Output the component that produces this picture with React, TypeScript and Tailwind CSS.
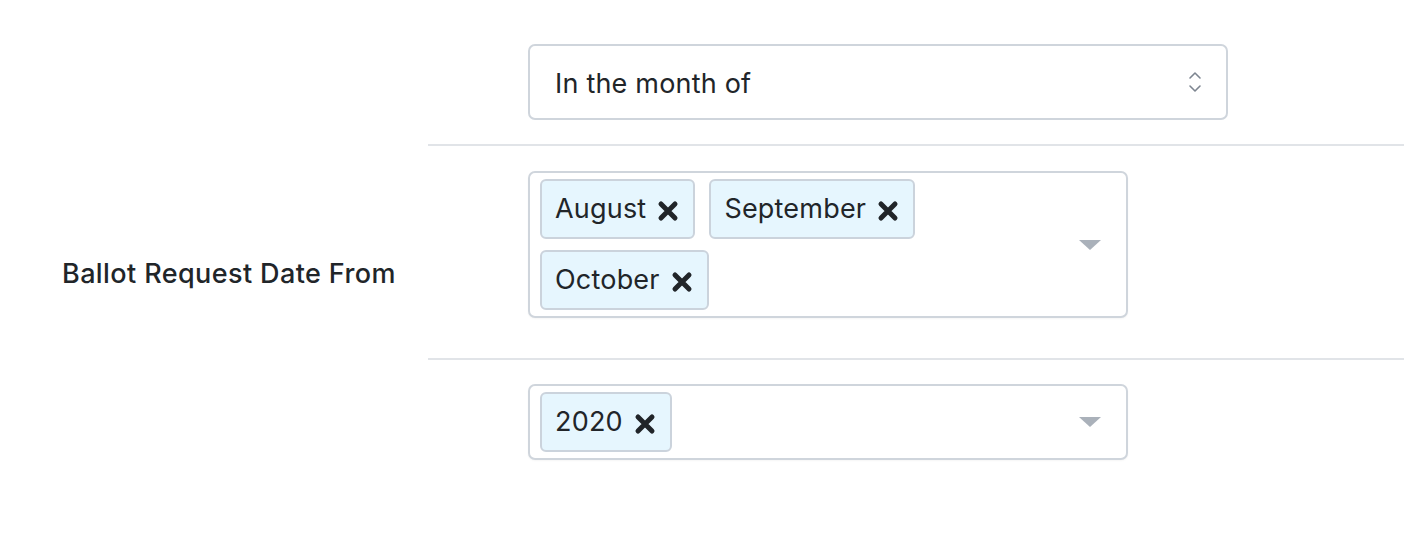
import React from "react";

function Tag({ label }: { label: string }) {
  return (
    <span className="flex h-[60px] items-center gap-[10px] rounded-[6px] border-2 border-[#cbd3dc] bg-[#e6f6fe] pl-[13px] pr-[13px] text-[27px] tracking-[0.2px] text-[#212529]">
      <span>{label}</span>
      <svg width="24" height="24" viewBox="0 0 24 24" className="mt-[3px]">
        <path d="M5 5 L19 19 M19 5 L5 19" stroke="#212529" strokeWidth="5" strokeLinecap="round" />
      </svg>
    </span>
  );
}

function Caret() {
  return (
    <svg width="24" height="12" viewBox="0 0 24 12" className="shrink-0">
      <path d="M1 1 L23 1 L12 11 Z" fill="#aab1ba" />
    </svg>
  );
}

function MultiSelect({ tags }: { tags: string[][] }) {
  return (
    <div className="flex w-[600px] items-center rounded-[7px] border-2 border-[#cfd5dc] bg-white pl-[10px] pr-[24px] shadow-[0_1px_2px_rgba(0,0,0,0.04)]">
      <div className="flex flex-1 flex-col gap-[11px] py-[6px]">
        {tags.map((row, i) => (
          <div key={i} className="flex gap-[14px]">
            {row.map((t) => (
              <Tag key={t} label={t} />
            ))}
          </div>
        ))}
      </div>
      <Caret />
    </div>
  );
}

export default function App() {
  return (
    <div
      className="flex h-[536px] w-[1404px] bg-white text-[#212529]"
      style={{ fontFamily: "Inter, 'Noto Sans', sans-serif" }}
    >
      <div className="flex w-[428px] items-center pl-[62px] pt-[13px]">
        <span className="text-[27px] font-medium tracking-[0.4px]">Ballot Request Date From</span>
      </div>
      <div className="flex flex-1 flex-col">
        <div className="border-b-2 border-[#e1e4e8] pb-[24px] pl-[100px] pt-[44px]">
          <div className="flex h-[76px] w-[700px] items-center justify-between rounded-[7px] border-2 border-[#cfd5dc] bg-white pl-[25px] pr-[24px]">
            <span className="pt-[4px] text-[27px] tracking-[0.2px]">In the month of</span>
            <svg width="14" height="24" viewBox="0 0 14 24">
              <path d="M2 8 L7 3 L12 8 M2 16 L7 21 L12 16" fill="none" stroke="#7d8590" strokeWidth="1.6" strokeLinecap="round" strokeLinejoin="round" />
            </svg>
          </div>
        </div>
        <div className="border-b-2 border-[#e1e4e8] pb-[40px] pl-[100px] pt-[25px]">
          <MultiSelect tags={[["August", "September"], ["October"]]} />
        </div>
        <div className="pl-[100px] pt-[24px]">
          <MultiSelect tags={[["2020"]]} />
        </div>
      </div>
    </div>
  );
}
